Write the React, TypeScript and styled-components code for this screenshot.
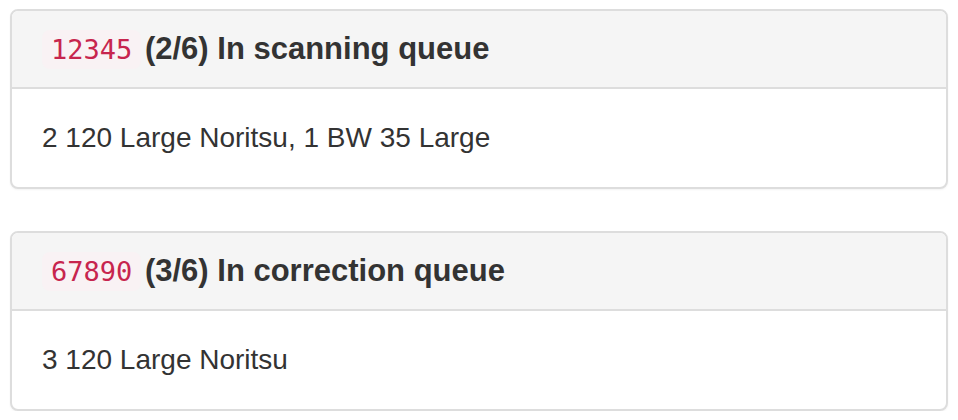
import React from "react";
import styled, { createGlobalStyle } from "styled-components";

const Global = createGlobalStyle`
  html, body { margin: 0; padding: 0; background: #fff; }
  body {
    font-family: "Liberation Sans", Arial, Helvetica, sans-serif;
    font-size: 28px;
    line-height: 1.42857;
    color: #333;
  }
  * { box-sizing: border-box; }
`;

const Page = styled.div`
  padding: 9px 10px 0 10px;
  display: flex;
  flex-direction: column;
  gap: 42px;
`;

const Panel = styled.div`
  background: #fff;
  border: 2px solid #ddd;
  border-radius: 8px;
  box-shadow: 0 1px 2px rgba(0, 0, 0, 0.05);
`;

const Heading = styled.div`
  background: #f5f5f5;
  border-bottom: 2px solid #ddd;
  border-radius: 6px 6px 0 0;
  padding: 0 30px;
  height: 78px;
  display: flex;
  align-items: center;
`;

const Title = styled.h3`
  margin: 0;
  font-size: 31px;
  font-weight: bold;
  line-height: 1.1;
  color: #333;
  white-space: nowrap;
`;

const Code = styled.code`
  font-family: "DejaVu Sans Mono", Menlo, Consolas, monospace;
  font-weight: normal;
  font-size: 27px;
  color: #c7254e;
  background: #f9f2f4;
  border-radius: 8px;
  padding: 4px 9px;
  margin-right: -5px;
`;

const Body = styled.div`
  padding: 0 30px;
  height: 98px;
  display: flex;
  align-items: center;
`;

type Item = { id: string; step: string; status: string; desc: string };

const items: Item[] = [
  { id: "12345", step: "(2/6)", status: "In scanning queue", desc: "2 120 Large Noritsu, 1 BW 35 Large" },
  { id: "67890", step: "(3/6)", status: "In correction queue", desc: "3 120 Large Noritsu" },
];

export default function App() {
  return (
    <>
      <Global />
      <Page>
        {items.map((it) => (
          <Panel key={it.id}>
            <Heading>
              <Title>
                <Code>{it.id}</Code> {it.step} {it.status}
              </Title>
            </Heading>
            <Body>{it.desc}</Body>
          </Panel>
        ))}
      </Page>
    </>
  );
}
